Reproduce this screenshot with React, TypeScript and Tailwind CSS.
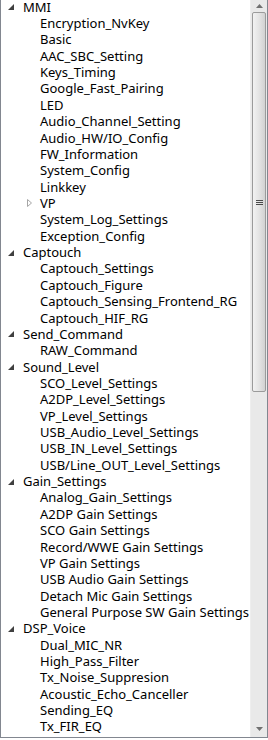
import React from "react";

type Node = { label: string; children?: Node[]; collapsed?: boolean };

const tree: Node[] = [
  {
    label: "MMI",
    children: [
      { label: "Encryption_NvKey" },
      { label: "Basic" },
      { label: "AAC_SBC_Setting" },
      { label: "Keys_Timing" },
      { label: "Google_Fast_Pairing" },
      { label: "LED" },
      { label: "Audio_Channel_Setting" },
      { label: "Audio_HW/IO_Config" },
      { label: "FW_Information" },
      { label: "System_Config" },
      { label: "Linkkey" },
      { label: "VP", collapsed: true, children: [] },
      { label: "System_Log_Settings" },
      { label: "Exception_Config" },
    ],
  },
  {
    label: "Captouch",
    children: [
      { label: "Captouch_Settings" },
      { label: "Captouch_Figure" },
      { label: "Captouch_Sensing_Frontend_RG" },
      { label: "Captouch_HIF_RG" },
    ],
  },
  { label: "Send_Command", children: [{ label: "RAW_Command" }] },
  {
    label: "Sound_Level",
    children: [
      { label: "SCO_Level_Settings" },
      { label: "A2DP_Level_Settings" },
      { label: "VP_Level_Settings" },
      { label: "USB_Audio_Level_Settings" },
      { label: "USB_IN_Level_Settings" },
      { label: "USB/Line_OUT_Level_Settings" },
    ],
  },
  {
    label: "Gain_Settings",
    children: [
      { label: "Analog_Gain_Settings" },
      { label: "A2DP Gain Settings" },
      { label: "SCO Gain Settings" },
      { label: "Record/WWE Gain Settings" },
      { label: "VP Gain Settings" },
      { label: "USB Audio Gain Settings" },
      { label: "Detach Mic Gain Settings" },
      { label: "General Purpose SW Gain Settings" },
    ],
  },
  {
    label: "DSP_Voice",
    children: [
      { label: "Dual_MIC_NR" },
      { label: "High_Pass_Filter" },
      { label: "Tx_Noise_Suppresion" },
      { label: "Acoustic_Echo_Canceller" },
      { label: "Sending_EQ" },
      { label: "Tx_FIR_EQ" },
    ],
  },
];

function Expander({ open }: { open: boolean }) {
  if (open) {
    return (
      <svg width="6" height="6" viewBox="0 0 6 6" className="shrink-0">
        <polygon points="6,0 6,6 0,6" fill="#404040" />
      </svg>
    );
  }
  return (
    <svg width="5" height="8" viewBox="0 0 5 8" className="shrink-0">
      <polygon points="0.5,0.5 4.5,4 0.5,7.5" fill="none" stroke="#a6a6a6" strokeWidth="1" />
    </svg>
  );
}

function Row({ node, depth }: { node: Node; depth: number }) {
  const hasKids = !!node.children;
  return (
    <>
      <div className="flex h-[16.36px] items-center whitespace-nowrap">
        <div
          className={depth === 0 ? "flex w-[22px] shrink-0 items-center justify-end pr-[9px]" : "flex w-[39px] shrink-0 items-center justify-end pr-[8px]"}
        >
          {hasKids && <Expander open={!node.collapsed} />}
        </div>
        <span className="text-[13px] leading-none text-black">{node.label}</span>
      </div>
      {hasKids && !node.collapsed && node.children!.map((c) => <Row key={c.label} node={c} depth={depth + 1} />)}
    </>
  );
}

function Scrollbar() {
  return (
    <div className="flex w-[17px] shrink-0 flex-col border-l border-[#eeeeee] bg-[#e9e9e9]">
      <div className="flex h-[12px] items-center justify-center">
        <svg width="7" height="4" viewBox="0 0 7 4">
          <polygon points="3.5,0 7,4 0,4" fill="#707070" />
        </svg>
      </div>
      <div className="mx-[1px] flex h-[380px] items-center justify-center rounded-[2px] border border-[#9b9b9b] bg-gradient-to-r from-[#f2f2f2] via-[#e4e4e4] to-[#d2d2d2]">
        <div className="flex flex-col gap-[1px]">
          <div className="h-[1px] w-[7px] bg-[#4a4a4a]" />
          <div className="h-[1px] w-[7px] bg-[#4a4a4a]" />
          <div className="h-[1px] w-[7px] bg-[#4a4a4a]" />
        </div>
      </div>
      <div className="flex-1" />
      <div className="flex h-[17px] items-center justify-center">
        <svg width="7" height="4" viewBox="0 0 7 4">
          <polygon points="0,0 7,0 3.5,4" fill="#707070" />
        </svg>
      </div>
    </div>
  );
}

export default function App() {
  return (
    <div className="flex h-[738px] w-[268px] border-x border-b border-[#828790] bg-white font-['Noto_Sans',sans-serif]">
      <div className="flex-1 overflow-hidden">
        <div className="-mt-[1px]">
          {tree.map((n) => (
            <Row key={n.label} node={n} depth={0} />
          ))}
        </div>
      </div>
      <Scrollbar />
    </div>
  );
}
